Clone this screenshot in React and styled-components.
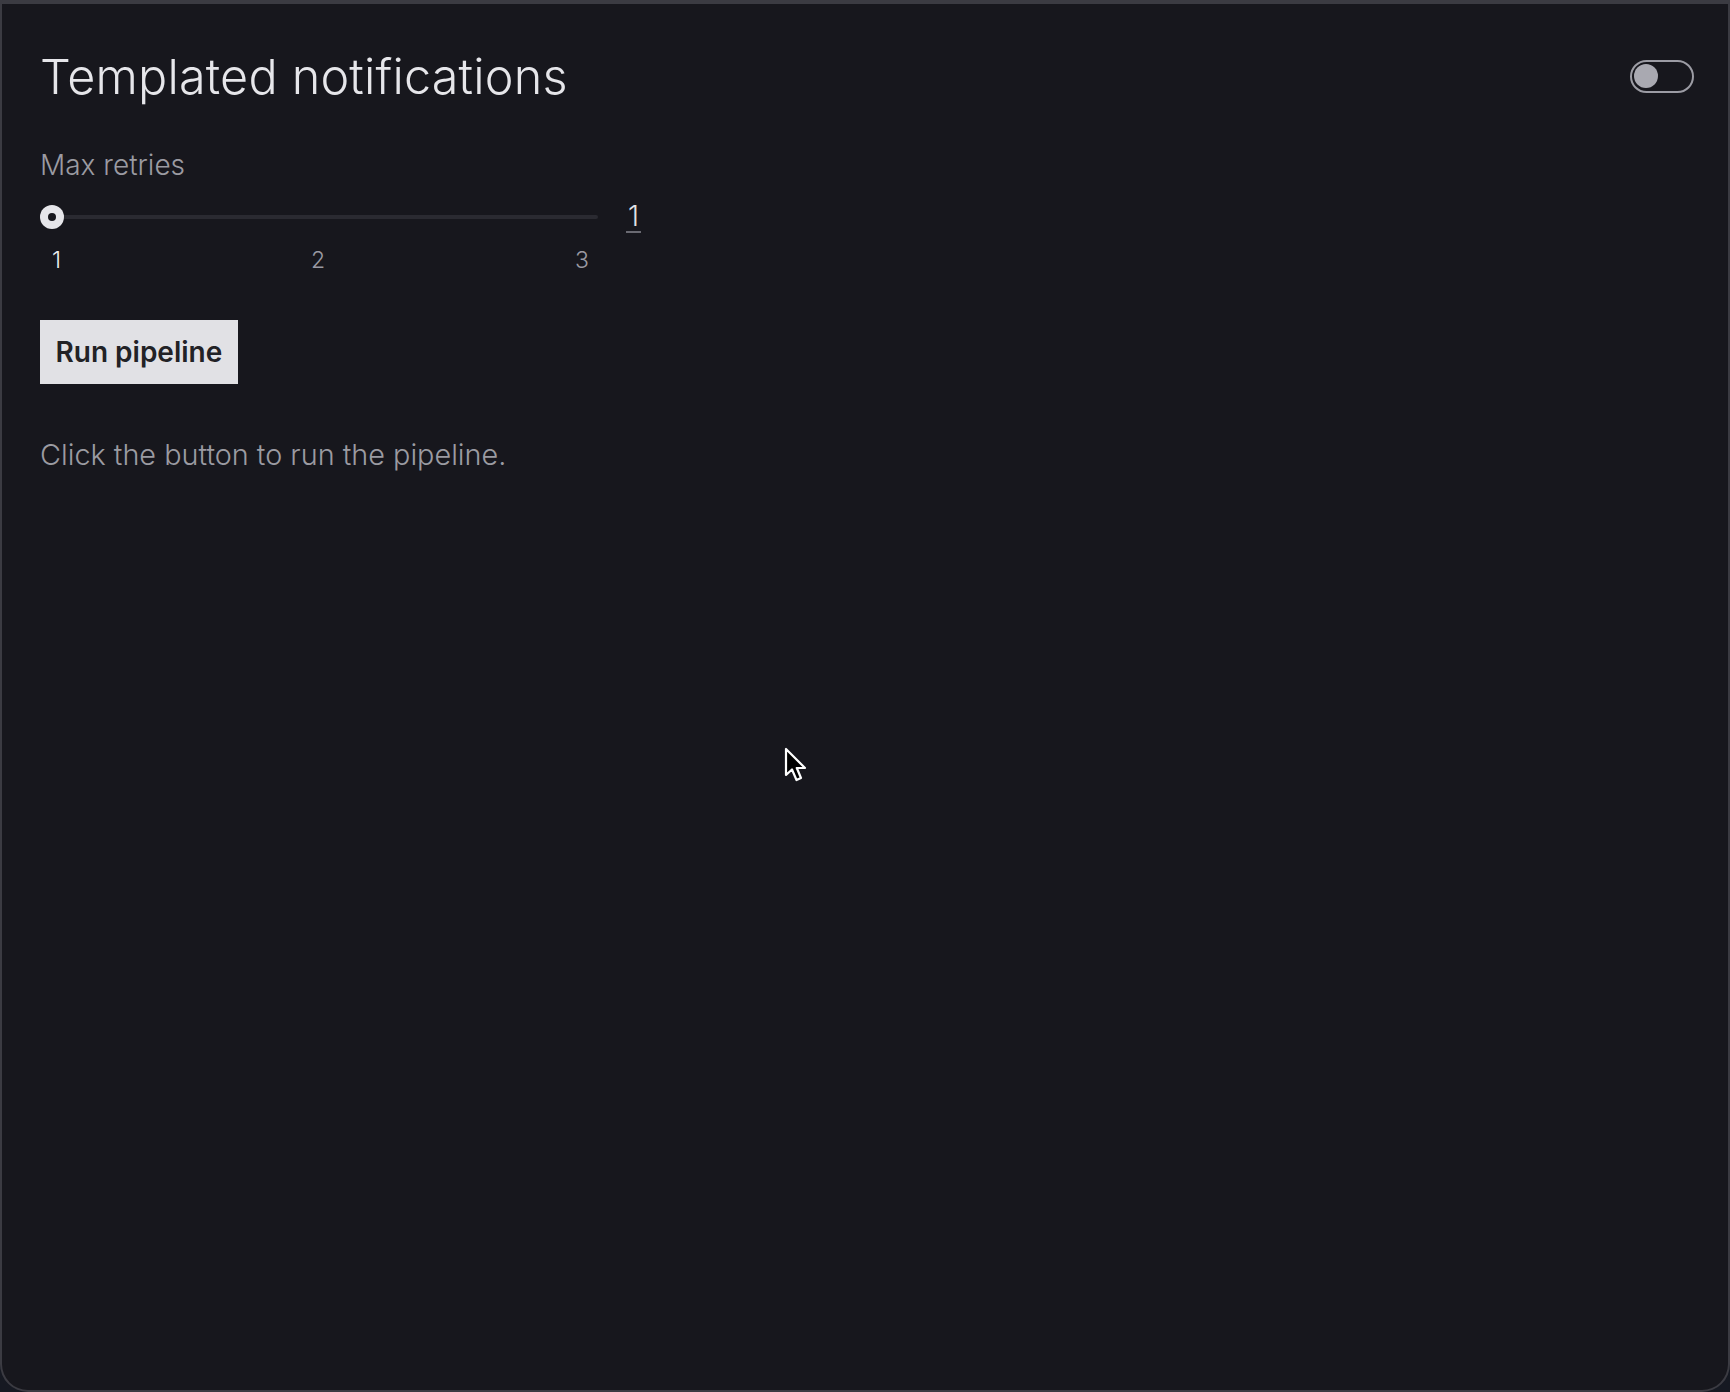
import React from "react";
import styled, { createGlobalStyle } from "styled-components";

const GlobalStyle = createGlobalStyle`
  html, body { margin: 0; padding: 0; background: #161922; }
  body { font-family: Inter, "Noto Sans", "Liberation Sans", sans-serif; }
  * { box-sizing: border-box; }
`;

const Frame = styled.div`
  position: relative;
  width: 1730px;
  height: 1392px;
  background: #17171d;
  border: 2px solid #3b3b42;
  border-top-width: 4px;
  border-radius: 0 0 28px 28px;
  padding: 36px 34px 0 38px;
  display: flex;
  flex-direction: column;
`;

const Header = styled.header`
  display: flex;
  align-items: center;
  justify-content: space-between;
  height: 72px;
`;

const Title = styled.h1`
  margin: 0;
  font-size: 48.5px;
  font-weight: 300;
  color: #e6e6ea;
  letter-spacing: 0.2px;
`;

const Switch = styled.div`
  width: 64px;
  height: 33px;
  border: 2px solid #9c9ca4;
  border-radius: 17px;
  padding: 2px;
  display: flex;
  align-items: center;
`;

const Knob = styled.span`
  width: 24px;
  height: 24px;
  border-radius: 50%;
  background: #a9a9b1;
`;

const Field = styled.section`
  margin-top: 37px;
  display: flex;
  flex-direction: column;
`;

const Label = styled.div`
  font-size: 28px;
  font-weight: 300;
  color: #9b9ba2;
  line-height: 32px;
`;

const SliderRow = styled.div`
  display: flex;
  align-items: center;
  margin-top: 21px;
  height: 30px;
`;

const Track = styled.div`
  position: relative;
  width: 558px;
  height: 4px;
  border-radius: 2px;
  background: #2a2a31;
  display: flex;
  align-items: center;
`;

const Thumb = styled.span`
  position: absolute;
  left: 0;
  width: 24px;
  height: 24px;
  border-radius: 50%;
  background: #e6e6ea;
  display: flex;
  align-items: center;
  justify-content: center;
  &::after {
    content: "";
    width: 8px;
    height: 8px;
    border-radius: 50%;
    background: #17171d;
  }
`;

const Value = styled.span`
  margin-left: 28px;
  font-size: 28px;
  font-weight: 300;
  color: #e2e2e6;
  border-bottom: 2px solid #6a6a72;
  line-height: 30px;
  padding: 0 2px;
`;

const Ticks = styled.div`
  display: flex;
  justify-content: space-between;
  width: 549px;
  padding-left: 12px;
  margin-top: 14px;
`;

const Tick = styled.span`
  font-size: 23px;
  font-weight: 300;
  color: ${(p) => (p.$active ? "#ececf0" : "#9a9aa2")};
`;

const Button = styled.button`
  margin-top: 46px;
  align-self: flex-start;
  height: 64px;
  padding: 0 15.5px;
  border: none;
  border-radius: 0;
  background: #e1e1e5;
  color: #222226;
  font-family: inherit;
  font-size: 28px;
  font-weight: 600;
`;

const Note = styled.p`
  margin: 53px 0 0;
  font-size: 28.8px;
  font-weight: 300;
  color: #9b9ba2;
`;

const Cursor = styled.svg`
  position: absolute;
  left: 782px;
  top: 743px;
`;

export default function App() {
  return (
    <>
      <GlobalStyle />
      <Frame>
        <Header>
          <Title>Templated notifications</Title>
          <Switch>
            <Knob />
          </Switch>
        </Header>
        <Field>
          <Label>Max retries</Label>
          <SliderRow>
            <Track>
              <Thumb />
            </Track>
            <Value>1</Value>
          </SliderRow>
          <Ticks>
            <Tick $active>1</Tick>
            <Tick>2</Tick>
            <Tick>3</Tick>
          </Ticks>
        </Field>
        <Button>Run pipeline</Button>
        <Note>Click the button to run the pipeline.</Note>
        <Cursor width="26" height="38" viewBox="0 0 26 38">
          <path
            d="M2 2 L2 28 L8 22.5 L12.5 33 L17 31 L12.8 21 L21 21 Z"
            fill="#000"
            stroke="#fff"
            strokeWidth="2.2"
            strokeLinejoin="round"
          />
        </Cursor>
      </Frame>
    </>
  );
}
